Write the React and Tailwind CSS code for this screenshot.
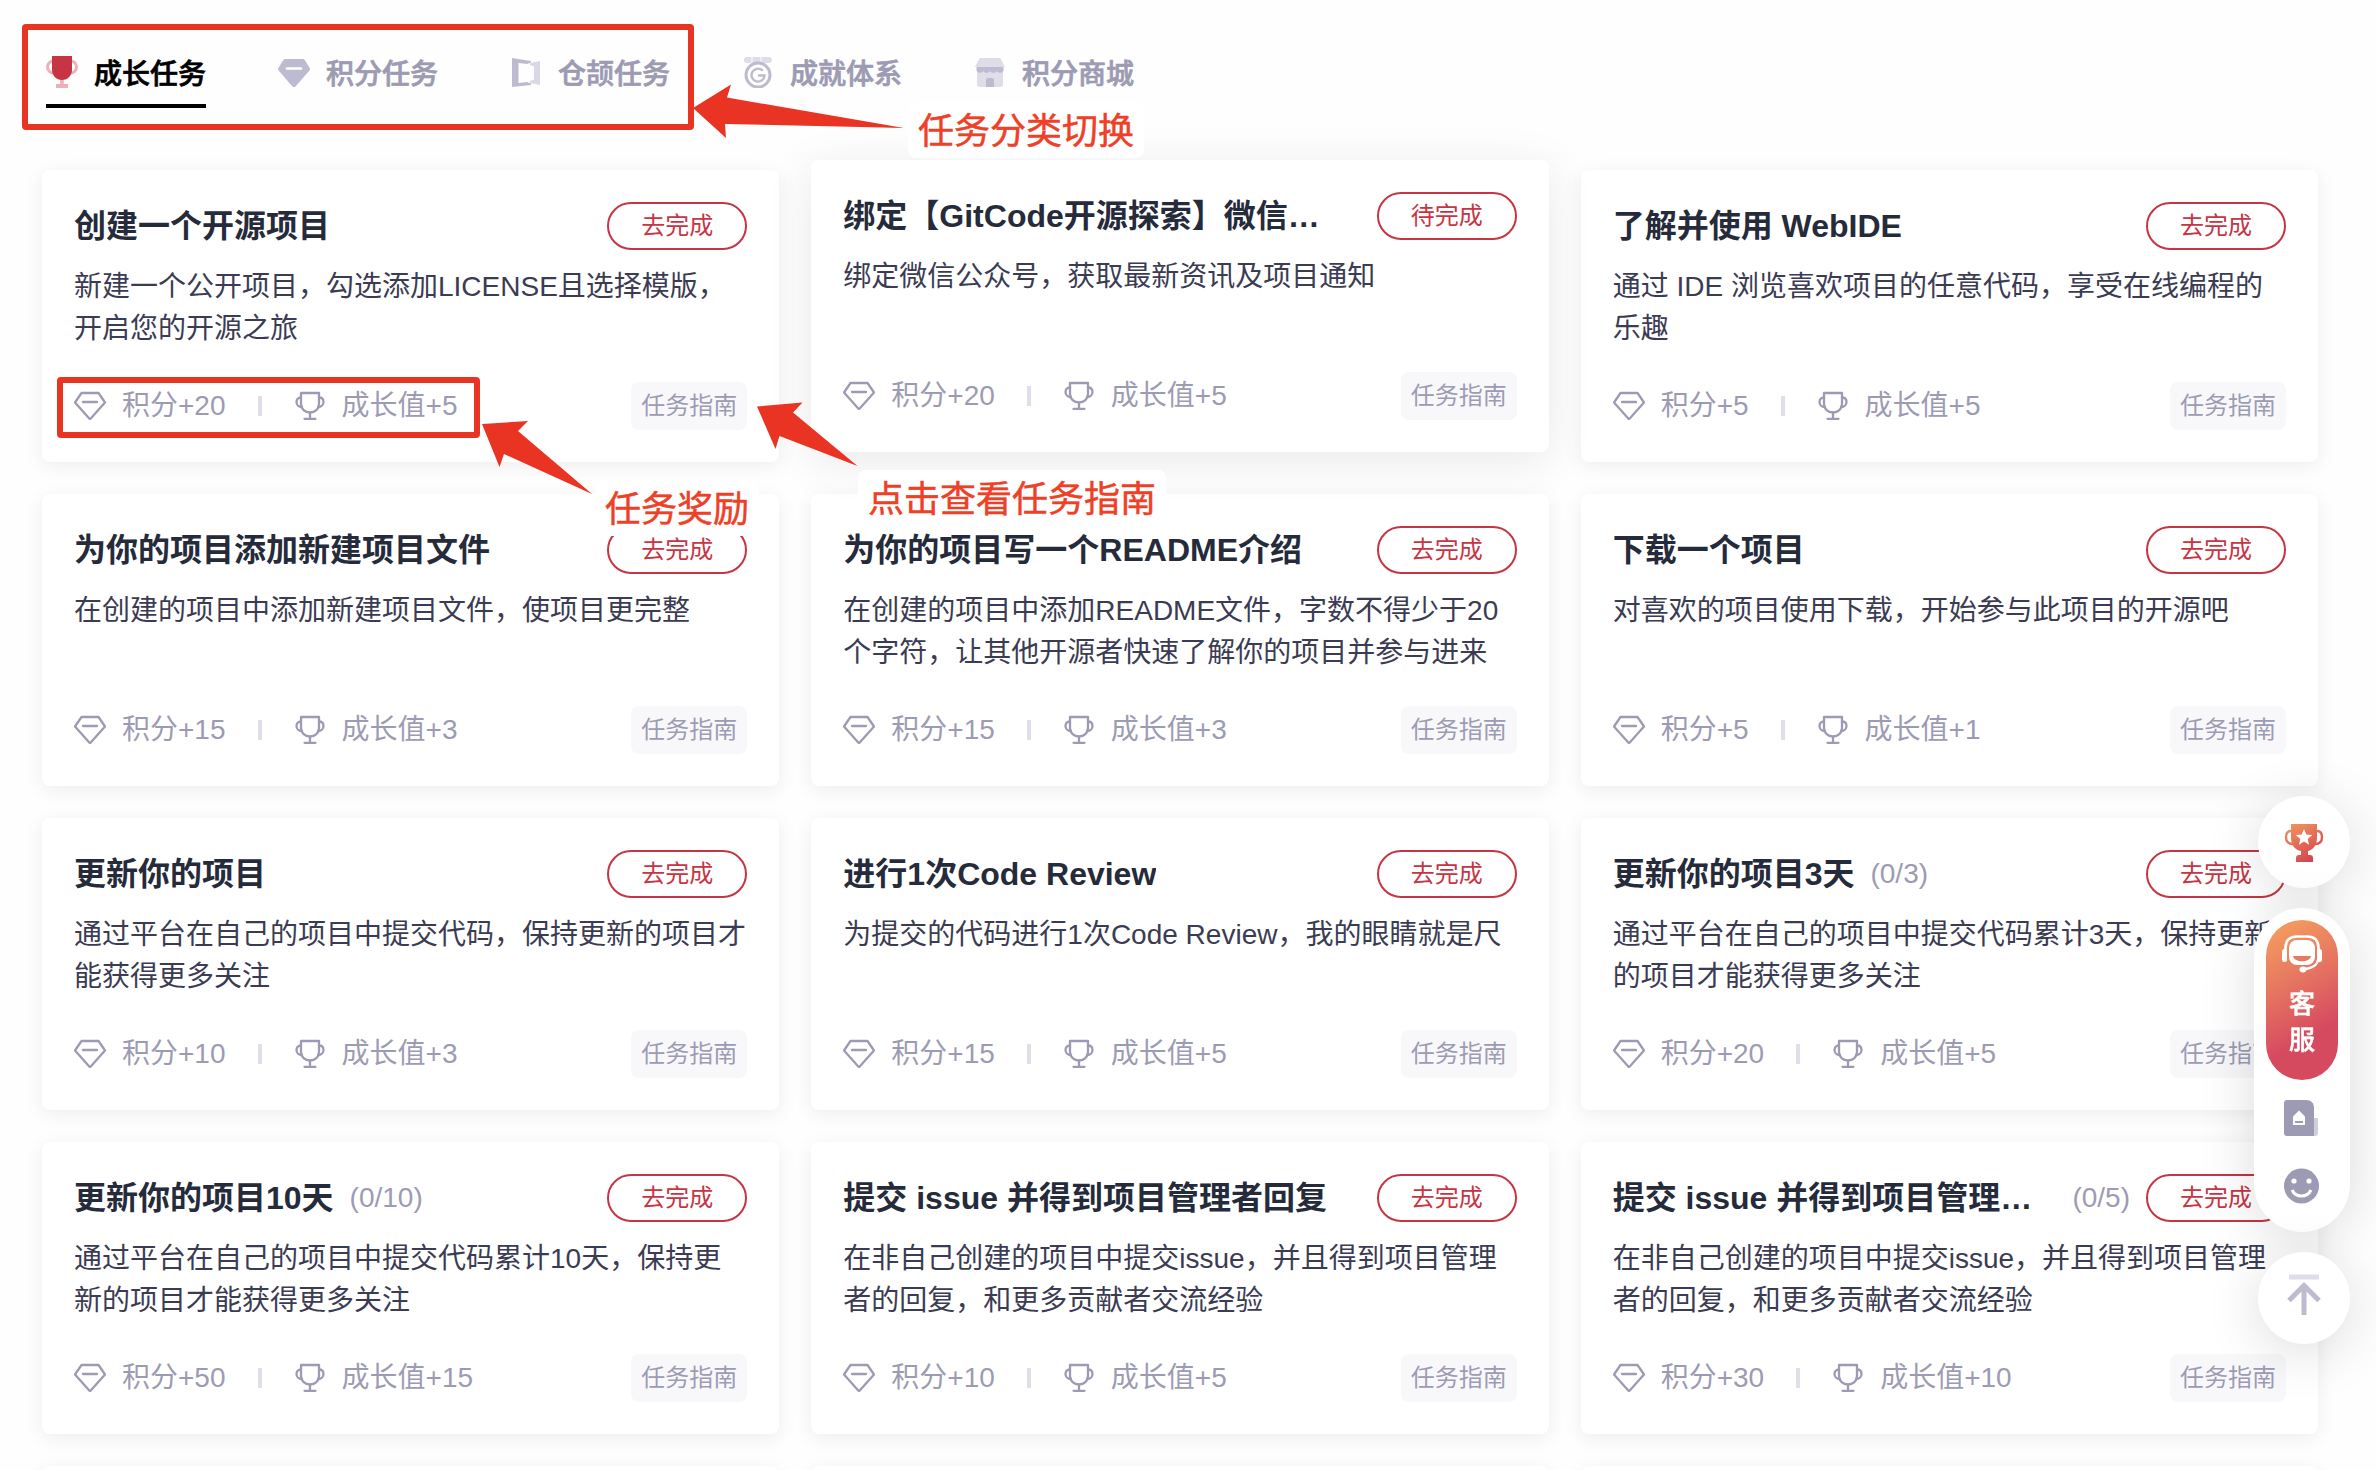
import React from 'react';

const tasks = [
    { title: '创建一个开源项目', desc: '新建一个公开项目，勾选添加LICENSE且选择模版，开启您的开源之旅', points: 20, growth: 5 },
    { title: '绑定【GitCode开源探索】微信公众号', desc: '绑定微信公众号，获取最新资讯及项目通知', points: 20, growth: 5, action: '待完成', active: true },
    { title: '了解并使用 WebIDE', desc: '通过 IDE 浏览喜欢项目的任意代码，享受在线编程的乐趣', points: 5, growth: 5 },
    { title: '为你的项目添加新建项目文件', desc: '在创建的项目中添加新建项目文件，使项目更完整', points: 15, growth: 3 },
    { title: '为你的项目写一个README介绍', desc: '在创建的项目中添加README文件，字数不得少于20个字符，让其他开源者快速了解你的项目并参与进来', points: 15, growth: 3 },
    { title: '下载一个项目', desc: '对喜欢的项目使用下载，开始参与此项目的开源吧', points: 5, growth: 1 },
    { title: '更新你的项目', desc: '通过平台在自己的项目中提交代码，保持更新的项目才能获得更多关注', points: 10, growth: 3 },
    { title: '进行1次Code Review', desc: '为提交的代码进行1次Code Review，我的眼睛就是尺', points: 15, growth: 5 },
    { title: '更新你的项目3天', progress: '(0/3)', desc: '通过平台在自己的项目中提交代码累计3天，保持更新的项目才能获得更多关注', points: 20, growth: 5 },
    { title: '更新你的项目10天', progress: '(0/10)', desc: '通过平台在自己的项目中提交代码累计10天，保持更新的项目才能获得更多关注', points: 50, growth: 15 },
    { title: '提交 issue 并得到项目管理者回复', desc: '在非自己创建的项目中提交issue，并且得到项目管理者的回复，和更多贡献者交流经验', points: 10, growth: 5 },
    { title: '提交 issue 并得到项目管理者回复', progress: '(0/5)', desc: '在非自己创建的项目中提交issue，并且得到项目管理者的回复，和更多贡献者交流经验', points: 30, growth: 10 },
];

const TrophyTabIcon = () => (
    <svg viewBox="0 0 32 32" className="size-8" aria-hidden="true">
        <circle cx="7.500" cy="11" r="6" fill="none" stroke="#ecb1b7" strokeWidth="3" />
        <circle cx="24.500" cy="11" r="6" fill="none" stroke="#ecb1b7" strokeWidth="3" />
        <path d="M14.200 23h3.600v5h4.200v4H10v-4h4.200z" fill="#ecb1b7" />
        <path d="M6 0h20v14c0 5-4 10-10 10S6 19 6 14z" fill="#c73443" />
    </svg>
);

const GemTabIcon = () => (
    <svg viewBox="0 0 32 32" className="size-8" aria-hidden="true">
        <path d="M7 3h18c.7 0 1.300.3 1.700 1l5 8c.4.7.4 1.500 0 2.200L18 30c-1 1.500-3 1.500-4 0L.4 14.200c-.5-.7-.5-1.500 0-2.200l5-8C5.700 3.300 6.300 3 7 3z" fill="#bdbbd0" />
        <path d="M9 12.500h14" stroke="#fff" strokeWidth="2.600" strokeLinecap="round" />
    </svg>
);

const DoorTabIcon = () => (
    <svg viewBox="0 0 32 32" className="size-8" aria-hidden="true">
        <path d="M2 2L21 5v1.500L17 8 8.500 7v20l8.500-1 4 1.500V29L2 31z" fill="#bdbbd0" />
        <path d="M20 7l10-2v24l-10-2v-2l4-1.500v-13L20 9z" fill="#d9d8e4" />
    </svg>
);

const MedalTabIcon = () => (
    <svg viewBox="0 0 32 32" className="size-8" aria-hidden="true">
        <path d="M5 1h4.500v6H5a3 3 0 010-6zM10.500 1h8v6h-8zM19.500 1H27a3 3 0 010 6h-7.500z" fill="#dedde8" />
        <circle cx="16" cy="19" r="12" fill="#fff" stroke="#bdbbd0" strokeWidth="3" />
        <path d="M20 14a6.500 6.500 0 102.500 5.500H17" fill="none" stroke="#bdbbd0" strokeWidth="2.400" strokeLinecap="round" />
    </svg>
);

const ShopTabIcon = () => (
    <svg viewBox="0 0 32 32" className="size-8" aria-hidden="true">
        <path d="M3 14h26v14a3 3 0 01-3 3H6a3 3 0 01-3-3z" fill="#dedde8" />
        <path d="M7 2h18c1 0 1.500.4 2 1.200L31 11H1l4-7.800C5.500 2.400 6 2 7 2z" fill="#dedde8" />
        <path d="M2.500 11h27v3.500c-1.500 3-5 3-6.800.5-1.700 2.500-5 2.500-6.700 0-1.700 2.500-5 2.500-6.700 0-1.800 2.500-5.300 2.500-6.800-.5z" fill="#bdbbd0" />
        <path d="M12 31v-7a2 2 0 012-2h4a2 2 0 012 2v7z" fill="#bdbbd0" />
    </svg>
);

const GemIcon = () => (
    <svg viewBox="0 0 32 32" className="size-8" fill="none" stroke="#9d9bb3" strokeWidth="2.300" strokeLinejoin="round" strokeLinecap="round" aria-hidden="true">
        <path d="M7.500 3h17L31 12.500 16.500 28.800h-1L1 12.500z" />
        <path d="M9 12h14" />
    </svg>
);

const CupIcon = () => (
    <svg viewBox="0 0 32 32" className="size-8" fill="none" stroke="#9d9bb3" strokeWidth="2.300" strokeLinejoin="round" strokeLinecap="round" aria-hidden="true">
        <path d="M7 3h18v11c0 5-4 8.500-9 8.500S7 19 7 14z" />
        <path d="M7 7.500c-3 0-4.500 2-4.500 4.500S4.500 17 8 17M25 7.500c3 0 4.500 2 4.500 4.500S27.500 17 24 17M16 23v5.500M10.500 28.800h11" />
    </svg>
);

const tabs = [
    { label: '成长任务', icon: <TrophyTabIcon />, current: true },
    { label: '积分任务', icon: <GemTabIcon /> },
    { label: '仓颉任务', icon: <DoorTabIcon /> },
    { label: '成就体系', icon: <MedalTabIcon /> },
    { label: '积分商城', icon: <ShopTabIcon /> },
];

const TaskCard = ({ task }) => (
    <article className={task.active
        ? 'bg-white rounded-lg p-8 -translate-y-2.5 shadow-[0_8px_48px_rgba(0,0,0,0.09)]'
        : 'bg-white rounded-lg p-8 shadow-[0_4px_20px_rgba(0,0,0,0.07)]'}>
        <div className="flex items-center justify-between h-12">
            <div className="flex items-center gap-4 min-w-0 mr-4">
                <h2 className="text-[32px] leading-12 font-bold text-[#252b3a] truncate">{task.title}</h2>
                <span className="text-[28px] text-[#9d9bb3] shrink-0">{task.progress}</span>
            </div>
            <button className="w-35 h-12 shrink-0 rounded-full border-2 border-[#c73443] text-2xl leading-none text-[#c73443]">
                {task.action || '去完成'}
            </button>
        </div>
        <p className="mt-4 h-21 text-[28px] leading-[42px] text-[#3b3c53]">{task.desc}</p>
        <div className="mt-8 flex items-center text-[28px] leading-12 text-[#9d9bb3]">
            <GemIcon />
            <span className="ml-4">积分+{task.points}</span>
            <span className="mx-8 w-1 h-5 bg-[#dfdeea]"></span>
            <CupIcon />
            <span className="ml-4">成长值+{task.growth}</span>
            <button className="ml-auto h-12 px-2.5 rounded-lg bg-[#f8f8fb] text-2xl">任务指南</button>
        </div>
    </article>
);

const SideTools = () => (
    <aside className="fixed right-[26px] bottom-[126px] flex flex-col items-end gap-5">
        <button aria-label="成就" className="size-23 rounded-full bg-white flex items-center justify-center shadow-[0_8px_56px_rgba(0,0,0,0.14)]">
            <svg viewBox="0 -1 40 40" className="size-10">
                <defs>
                    <linearGradient id="cup" gradientUnits="userSpaceOnUse" x1="4" y1="0" x2="26" y2="39">
                        <stop offset="0" stopColor="#f2985f" />
                        <stop offset="1" stopColor="#d3454f" />
                    </linearGradient>
                </defs>
                <path d="M8 8H7c-4 0-5 3-5 6 0 5 3 7 7 7M32 8h1c4 0 5 3 5 6 0 5-3 7-7 7" fill="none" stroke="url(#cup)" strokeWidth="2.400" />
                <path d="M7 1h26v14c0 7-4 12-9 13v4h2c2 0 3 1 3 3v4H12v-4c0-2 1-3 3-3h2v-4C11 27 7 22 7 15z" fill="url(#cup)" />
                <path d="M20 6l2.300 5.500 5.900.5-4.500 3.900 1.400 5.800L20 18.600l-5.100 3.100 1.400-5.800-4.500-3.900 5.900-.5z" fill="#fff" />
            </svg>
        </button>
        <div className="w-24 rounded-full bg-white p-3 pb-7 flex flex-col items-center shadow-[0_8px_56px_rgba(0,0,0,0.14)]">
            <button className="w-18 h-40 rounded-full bg-linear-150 from-[#f2975f] from-10% to-[#d64a60] to-70% flex flex-col items-center pt-3.5 text-white">
                <svg viewBox="0 0 40 40" className="size-10" aria-hidden="true">
                    <path d="M3.500 16v-2C3.500 6 8 2.500 15 2.500h10c7 0 11.500 3.500 11.500 11.500v8c0 8-4 12-14 13" fill="none" stroke="#fff" strokeWidth="2.600" />
                    <rect x="7" y="6" width="26" height="25" rx="8" fill="#fff" />
                    <rect x="0" y="15" width="5" height="13" rx="2.500" fill="#fff" />
                    <rect x="35" y="15" width="5" height="13" rx="2.500" fill="#fff" />
                    <path d="M11 22h18c-1 7-17 7-18 0z" fill="#e57a60" />
                    <ellipse cx="21" cy="35.500" rx="3.500" ry="3" fill="#fff" />
                </svg>
                <span className="mt-3 w-7 text-[26px] leading-9 font-medium [-webkit-text-stroke:0.5px]">客服</span>
            </button>
            <button aria-label="文档" className="mt-5">
                <svg viewBox="0 0 36 36" className="size-9">
                    <path d="M30 18h4v15a3 3 0 01-3 3h-4z" fill="#cfcedb" />
                    <path d="M4 0h18c5 0 8 3 8 8v28H3a3 3 0 01-3-3V3a3 3 0 013-3z" fill="#9d9bb3" />
                    <path d="M15 10.500l6 6V25H9v-8.500z" fill="#fff" />
                    <path d="M11 22h8" stroke="#9d9bb3" strokeWidth="2" />
                </svg>
            </button>
            <button aria-label="反馈" className="mt-8">
                <svg viewBox="0 0 36 36" className="size-9">
                    <circle cx="17.500" cy="18" r="17.500" fill="#9d9bb3" />
                    <circle cx="10" cy="13" r="2.600" fill="#fff" />
                    <circle cx="25" cy="13" r="2.600" fill="#fff" />
                    <path d="M8 22c4 8 15 8 19 0" fill="none" stroke="#fff" strokeWidth="3" />
                </svg>
            </button>
        </div>
        <button aria-label="回到顶部" className="size-23 rounded-full bg-white flex items-center justify-center shadow-[0_8px_56px_rgba(0,0,0,0.14)]">
            <svg viewBox="0 0 40 48" className="w-10 h-12" fill="none">
                <path d="M5 3h30" stroke="#dedde8" strokeWidth="5" />
                <path d="M20 41V13M5 26.500l15-15 15 15" stroke="#bdbbd0" strokeWidth="5" />
            </svg>
        </button>
    </aside>
);

// Red boxes, arrows and captions drawn over the page
const Annotations = () => (
    <div className="absolute inset-0 pointer-events-none text-4xl leading-[52px] text-[#ee4027] [-webkit-text-stroke:0.5px]">
        <div className="absolute left-[22px] top-6 w-[672px] h-[106px] border-6 border-[#e93323] rounded-sm"></div>
        <div className="absolute left-[57px] top-[377px] w-[423px] h-[61px] border-6 border-[#e93323] rounded-sm"></div>
        <span className="absolute left-[908px] top-[102px] px-2.5 pt-1 leading-[52px] bg-white rounded-lg">任务分类切换</span>
        <span className="absolute left-[595px] top-[480px] px-2.5 pt-1 leading-[52px] bg-white rounded-lg">任务奖励</span>
        <span className="absolute left-[858px] top-[470px] px-2.5 pt-1 leading-[52px] bg-white rounded-lg">点击查看任务指南</span>
        <svg viewBox="0 0 1000 520" className="absolute left-0 top-0 w-[1000px] h-[520px]" fill="#e93323" aria-hidden="true">
            <path d="M693 108L731 84.500L727 97.500L904 128L725 124L726 138z" />
            <path d="M482 424L528 421L518 431L592 494L504 454L499.500 467z" />
            <path d="M757 406.500L802.500 402.500L793 412.500L857.500 466L779.500 436L775.500 449z" />
        </svg>
    </div>
);

const App = () => {
    return (
        <div className="relative h-screen overflow-hidden bg-[#fefefe] font-['Liberation_Sans','Noto_Sans_CJK_SC',sans-serif]">
            <nav className="flex gap-18 pl-[46px] pt-12">
                {tabs.map((tab) => (
                    <a
                        key={tab.label}
                        href="#"
                        className={tab.current
                            ? 'flex items-center gap-4 h-15 pb-2 border-b-4 border-black text-[28px] font-medium text-black'
                            : 'flex items-center gap-4 h-15 pb-2 border-b-4 border-transparent text-[28px] font-medium text-[#9d9bb3]'}
                    >
                        {tab.icon}
                        <span className="pt-1.5 [-webkit-text-stroke:0.7px]">{tab.label}</span>
                    </a>
                ))}
            </nav>
            <main className="grid grid-cols-3 gap-8 pt-[62px] pl-[42px] pr-[58px]">
                {tasks.map((task, i) => <TaskCard key={i} task={task} />)}
                <div className="h-12 rounded-lg bg-white shadow-[0_4px_20px_rgba(0,0,0,0.07)]"></div>
                <div className="h-12 rounded-lg bg-white shadow-[0_4px_20px_rgba(0,0,0,0.07)]"></div>
                <div className="h-12 rounded-lg bg-white shadow-[0_4px_20px_rgba(0,0,0,0.07)]"></div>
            </main>
            <Annotations />
            <SideTools />
        </div>
    );
};

export default App;
